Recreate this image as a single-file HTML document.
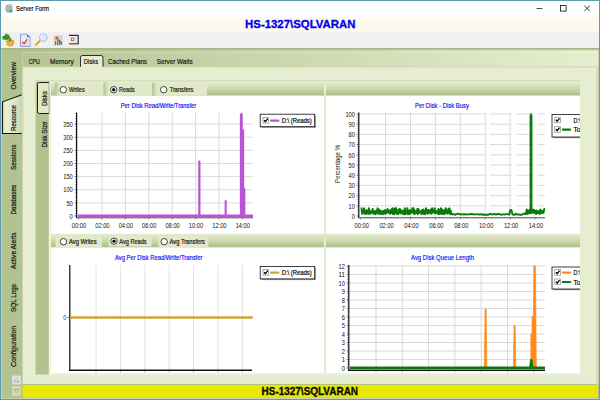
<!DOCTYPE html>
<html><head><meta charset="utf-8"><title>Server Form</title>
<style>
html,body{margin:0;padding:0;background:#fff;overflow:hidden}
body{width:600px;height:400px}
svg{display:block;font-family:"Liberation Sans",Arial,sans-serif}
</style></head><body>
<svg width="600" height="400" viewBox="0 0 600 400">
<defs>
<linearGradient id="gh" gradientUnits="userSpaceOnUse" x1="22" y1="0" x2="598" y2="0"><stop offset="0" stop-color="#b3c38f"/><stop offset="1" stop-color="#e4ebcc"/></linearGradient>
<linearGradient id="gh2" gradientUnits="userSpaceOnUse" x1="22" y1="0" x2="598" y2="0"><stop offset="0" stop-color="#b5c592"/><stop offset="1" stop-color="#e7edd0"/></linearGradient>
<linearGradient id="gv" x1="0" y1="0" x2="0" y2="1"><stop offset="0" stop-color="#e3ebc9"/><stop offset="0.45" stop-color="#d0dbb0"/><stop offset="1" stop-color="#a9bb84"/></linearGradient>
<linearGradient id="gsub" x1="0" y1="0" x2="1" y2="0"><stop offset="0" stop-color="#c3cfa2"/><stop offset="0.12" stop-color="#dde6c2"/><stop offset="1" stop-color="#e0e8c6"/></linearGradient>
<linearGradient id="gedge" x1="0" y1="0" x2="1" y2="0"><stop offset="0" stop-color="#b4c390"/><stop offset="1" stop-color="#e1e9c8"/></linearGradient>
<linearGradient id="gtab" gradientUnits="userSpaceOnUse" x1="3" y1="0" x2="22" y2="0"><stop offset="0" stop-color="#e9efd5"/><stop offset="0.55" stop-color="#e2e9c9"/><stop offset="1" stop-color="#c9d5aa"/></linearGradient>
</defs>

<rect x="0" y="0" width="600" height="400" fill="#fff" />
<rect x="0" y="17" width="600" height="15" fill="#fdf9ec" />
<rect x="0" y="32" width="600" height="16" fill="#f0f0f0" />
<rect x="0" y="48" width="600" height="352" fill="#b3c38f" />
<text x="16" y="11.2" font-size="7.6" fill="#000" font-weight="normal" text-anchor="start" textLength="33" lengthAdjust="spacingAndGlyphs" stroke="#000" stroke-width=".15">Server Form</text>
<g><ellipse cx="9" cy="6" rx="3" ry="1.4" fill="#c9cdd2" stroke="#8d949b" stroke-width=".5"/><path d="M6 6v5a3 1.4 0 0 0 6 0V6" fill="#aeb4bb" stroke="#858c93" stroke-width=".5"/><circle cx="11" cy="11" r="1.6" fill="#4caf3c"/></g>
<line x1="536.5" y1="8.5" x2="542.5" y2="8.5" stroke="#222" stroke-width="0.8" />
<rect x="560.5" y="5.5" width="5.6" height="5.6" fill="none" stroke="#222" stroke-width="0.9"/>
<path d="M584.3 5.6l5.6 5.6M589.9 5.6l-5.6 5.6" stroke="#222" stroke-width="0.9" fill="none"/>
<text x="300.3" y="28.4" font-size="11.4" fill="#0000ee" font-weight="bold" text-anchor="middle" textLength="110.5" lengthAdjust="spacingAndGlyphs" stroke="#0000ee" stroke-width=".3">HS-1327\SQLVARAN</text>
<g>
<path d="M2.200 38.500Q1.800 35.500 4.500 35.800Q5 33.600 7 34.200Q9.500 33.800 9.800 36.500Q11 37.800 9.800 39.500Q8.500 41 6.500 39.800Q5.500 40.800 4.200 39.800Q2.500 39.800 2.200 38.500z" fill="#25b525"/>
<path d="M3 37.500Q4.500 36 6 37.500Q7.500 39 9 37.500" stroke="#16801a" stroke-width="1" fill="none"/>
<circle cx="10.200" cy="42.500" r="3.300" fill="#e2a524"/><circle cx="10.200" cy="42.500" r="3.700" fill="none" stroke="#d8951c" stroke-width="1.300" stroke-dasharray="1.400 1.500"/><circle cx="10.200" cy="42.600" r="1" fill="#f6dd9a"/>
<path d="M6 33.600v3.600M10 38v4" stroke="#4a5070" stroke-width="1"/>
<path d="M20.500 34.300h6.500l3 3v9.200h-9.500z" fill="#e6f0fb" stroke="#8c8fd2" stroke-width=".9"/><path d="M21 42h8.500v4h-8.500z" fill="#cde4f7"/><path d="M27 34.300v3h3z" fill="#3c7ad6"/>
<path d="M22.200 41.800l2 1.900l3-4.600" stroke="#f0401e" stroke-width="1.300" fill="none"/>
<circle cx="43.200" cy="37.500" r="3.700" fill="#dceefc" stroke="#9cc6ee" stroke-width="1.100"/><path d="M41.200 36.500a2.300 2.300 0 0 1 2.500-1.600" stroke="#fff" stroke-width=".9" fill="none"/>
<path d="M39.600 41l-3.800 3.700" stroke="#f0a030" stroke-width="2" stroke-linecap="round"/>
<rect x="53.400" y="35.600" width="9.300" height="9.800" fill="#d2d2d2" stroke="#e4e4e4" stroke-width=".6"/>
<path d="M55.500 45v-3.800" stroke="#3a6ad8" stroke-width="1.100"/><path d="M57.600 45v-4.500M59.400 45v-3.200" stroke="#22a030" stroke-width="1.100"/><path d="M61.200 45v-2" stroke="#c04060" stroke-width="1"/>
<path d="M57 38.500l5 4.800" stroke="#111" stroke-width="1"/>
<circle cx="56.700" cy="38" r="1.900" fill="#f59a1c"/><circle cx="56.700" cy="38" r=".9" fill="#e8301c"/>
<rect x="69" y="34.800" width="9.600" height="9.600" fill="#f4f0d8"/><path d="M69 35.400h9.600M78.200 35v9" stroke="#1c2c70" stroke-width="1.300" fill="none"/><path d="M69 43.800h9.600" stroke="#6a6424" stroke-width="1.400"/><path d="M75.300 37v6M75.300 39h3M75.300 41h3" stroke="#d8d2b0" stroke-width=".6"/>
<rect x="71.400" y="38.100" width="2.300" height="2.600" fill="#fff" stroke="#b03aa0" stroke-width=".8"/>
</g>
<line x1="1.3" y1="48" x2="1.3" y2="398" stroke="#d4dba8" stroke-width="0.7" />
<rect x="22.5" y="48" width="576" height="19" fill="url(#gh)" />
<rect x="22" y="52" width="574.5" height="332.5" fill="#ffffff" fill-opacity=".28"/>
<rect x="23" y="53" width="573.5" height="14" fill="url(#gh2)" />
<rect x="596.5" y="67" width="2" height="317.5" fill="#d3ddb6" />
<rect x="23" y="67" width="573.5" height="317" fill="#e7edd0" />
<line x1="23" y1="66.9" x2="596.5" y2="66.9" stroke="#c9d5ac" stroke-width="0.9" />
<rect x="1" y="48" width="598" height="1.8" fill="#a9b986" />
<path d="M80.500 67V57.500a2 2 0 0 1 2-2H101a2 2 0 0 1 2 2V67" fill="#e7edd0" stroke="#2a2f22" stroke-width="1"/>
<line x1="80" y1="67.5" x2="103.5" y2="67.5" stroke="#e7edd0" stroke-width="1.4" />
<text x="28.7" y="64" font-size="7.6" fill="#141414" font-weight="normal" text-anchor="start" textLength="11.3" lengthAdjust="spacingAndGlyphs" stroke="#141414" stroke-width=".2">CPU</text>
<text x="50" y="64" font-size="7.6" fill="#141414" font-weight="normal" text-anchor="start" textLength="23.7" lengthAdjust="spacingAndGlyphs" stroke="#141414" stroke-width=".2">Memory</text>
<text x="83.7" y="64" font-size="7.6" fill="#141414" font-weight="normal" text-anchor="start" textLength="14.6" lengthAdjust="spacingAndGlyphs" stroke="#141414" stroke-width=".2">Disks</text>
<text x="108" y="64" font-size="7.6" fill="#141414" font-weight="normal" text-anchor="start" textLength="39" lengthAdjust="spacingAndGlyphs" stroke="#141414" stroke-width=".2">Cached Plans</text>
<text x="156.7" y="64" font-size="7.6" fill="#141414" font-weight="normal" text-anchor="start" textLength="36" lengthAdjust="spacingAndGlyphs" stroke="#141414" stroke-width=".2">Server Waits</text>
<path d="M21.800 94.700L2.600 101.800V133.500H21.800" fill="url(#gtab)" stroke="#14170f" stroke-width="1.100" stroke-linejoin="miter"/>
<path d="M21.800 95.300V133H24V95.300z" fill="#c9d5aa"/>
<rect x="22.3" y="95.3" width="1.3" height="37.7" fill="#dfe7c6" />
<text transform="translate(16.4 89.5) rotate(-90)" font-size="7.6" fill="#141414" stroke="#141414" stroke-width=".2" textLength="27.5" lengthAdjust="spacingAndGlyphs">Overview</text>
<text transform="translate(16.4 131) rotate(-90)" font-size="7.6" fill="#141414" stroke="#141414" stroke-width=".2" textLength="26" lengthAdjust="spacingAndGlyphs">Resource</text>
<text transform="translate(16.4 170) rotate(-90)" font-size="7.6" fill="#141414" stroke="#141414" stroke-width=".2" textLength="25.400000000000006" lengthAdjust="spacingAndGlyphs">Sessions</text>
<text transform="translate(16.4 214.5) rotate(-90)" font-size="7.6" fill="#141414" stroke="#141414" stroke-width=".2" textLength="29.5" lengthAdjust="spacingAndGlyphs">Databases</text>
<text transform="translate(16.4 269) rotate(-90)" font-size="7.6" fill="#141414" stroke="#141414" stroke-width=".2" textLength="36.5" lengthAdjust="spacingAndGlyphs">Active Alerts</text>
<text transform="translate(16.4 312) rotate(-90)" font-size="7.6" fill="#141414" stroke="#141414" stroke-width=".2" textLength="28" lengthAdjust="spacingAndGlyphs">SQL Logs</text>
<text transform="translate(16.4 367) rotate(-90)" font-size="7.6" fill="#141414" stroke="#141414" stroke-width=".2" textLength="41" lengthAdjust="spacingAndGlyphs">Configuration</text>
<rect x="12" y="375.5" width="9" height="9" fill="#dedee8" rx="1"/>
<path d="M13.800 381.800L16.500 378.800L19.200 381.800z" fill="#f4efe2" stroke="#9a8458" stroke-width=".6"/>
<rect x="12" y="386" width="9" height="10" fill="#cfdab5" rx="1"/>
<path d="M14 389.500L16.500 392.300L19 389.500z" fill="#f4efe2" stroke="#9a8458" stroke-width=".6"/>
<rect x="22.5" y="384.5" width="575.5" height="12.7" fill="#e8e800" />
<line x1="22.5" y1="384.4" x2="597" y2="384.4" stroke="#9db394" stroke-width="0.7" />
<text x="309.8" y="394.9" font-size="10" fill="#0a0a0a" font-weight="bold" text-anchor="middle" textLength="96.5" lengthAdjust="spacingAndGlyphs" stroke="#0a0a0a" stroke-width=".3">HS-1327\SQLVARAN</text>
<rect x="35" y="80" width="545" height="294.5" fill="#eef3de" />
<rect x="35.5" y="81.5" width="14" height="293" fill="#b3c38f" />
<rect x="48.8" y="81.5" width="2.4" height="293" fill="#edf2dd" />
<path d="M48.800 82.500H39.500a2 2 0 0 0-2 2V111.500a2 2 0 0 0 2 2H48.800z" fill="#e1e8c6" stroke="#181c12" stroke-width="1"/>
<rect x="48.2" y="83.1" width="1.2" height="29.8" fill="#e6ecd0" />
<text transform="translate(46.7 106) rotate(-90)" font-size="7.3" fill="#141414" stroke="#141414" stroke-width=".2" textLength="15" lengthAdjust="spacingAndGlyphs">Disks</text>
<text transform="translate(46.7 147.5) rotate(-90)" font-size="7.6" fill="#141414" stroke="#141414" stroke-width=".2" textLength="26.0" lengthAdjust="spacingAndGlyphs">Disk Size</text>
<rect x="51" y="82" width="273" height="13.7" fill="url(#gv)" />
<rect x="326" y="82" width="254" height="13.7" fill="url(#gv)" />
<rect x="51" y="234.3" width="273" height="13.2" fill="url(#gv)" />
<rect x="326" y="234.3" width="254" height="13.2" fill="url(#gv)" />
<line x1="35.5" y1="81" x2="580" y2="81" stroke="#c0cea0" stroke-width="1.1" />
<line x1="51" y1="82.2" x2="580" y2="82.2" stroke="#f1f5e3" stroke-width="0.8" />
<rect x="324" y="82" width="2" height="292.5" fill="#e6ecd0" />
<rect x="51" y="95.7" width="273" height="138.6" fill="#fff" />
<rect x="51" y="247.5" width="273" height="125.5" fill="#fff" />
<rect x="326" y="95.7" width="254" height="138.6" fill="#fff" />
<rect x="326" y="247.5" width="254" height="125.5" fill="#fff" />
<line x1="51" y1="234.3" x2="580" y2="234.3" stroke="#dfe6c8" stroke-width="0.8" />
<rect x="55" y="82.5" width="48.5" height="13.2" fill="#e1e9c8" />
<rect x="55" y="82.5" width="5" height="13.2" fill="url(#gedge)" />
<circle cx="63.3" cy="89.7" r="3.2" fill="#fff" stroke="#2e2e2e" stroke-width=".9"/>
<text x="69" y="92.3" font-size="7.4" fill="#111" font-weight="normal" text-anchor="start" textLength="15.7" lengthAdjust="spacingAndGlyphs" stroke="#111" stroke-width=".2">Writes</text>
<rect x="103.5" y="82.5" width="48.5" height="13.2" fill="#e1e9c8" />
<rect x="103.5" y="82.5" width="5" height="13.2" fill="url(#gedge)" />
<circle cx="113.7" cy="89.7" r="3.2" fill="#fff" stroke="#2e2e2e" stroke-width=".9"/>
<circle cx="113.7" cy="89.7" r="1.700" fill="#111"/>
<text x="119" y="92.3" font-size="7.4" fill="#111" font-weight="normal" text-anchor="start" textLength="15.7" lengthAdjust="spacingAndGlyphs" stroke="#111" stroke-width=".2">Reads</text>
<rect x="152" y="82.5" width="55" height="13.2" fill="#e1e9c8" />
<rect x="152" y="82.5" width="5" height="13.2" fill="url(#gedge)" />
<circle cx="163.7" cy="89.7" r="3.2" fill="#fff" stroke="#2e2e2e" stroke-width=".9"/>
<text x="169.7" y="92.3" font-size="7.4" fill="#111" font-weight="normal" text-anchor="start" textLength="23.6" lengthAdjust="spacingAndGlyphs" stroke="#111" stroke-width=".2">Transfers</text>
<rect x="55.5" y="235.8" width="46.5" height="11.7" fill="#e1e9c8" />
<circle cx="63.5" cy="241.7" r="3.2" fill="#fff" stroke="#2e2e2e" stroke-width=".9"/>
<text x="69" y="244.29999999999998" font-size="7.4" fill="#111" font-weight="normal" text-anchor="start" textLength="27.7" lengthAdjust="spacingAndGlyphs" stroke="#111" stroke-width=".2">Avg Writes</text>
<rect x="108.5" y="234.8" width="43.2" height="11.6" fill="#e1e9c8" />
<circle cx="114" cy="241.2" r="3.2" fill="#fff" stroke="#2e2e2e" stroke-width=".9"/>
<circle cx="114" cy="241.2" r="1.700" fill="#111"/>
<text x="119.3" y="243.79999999999998" font-size="7.4" fill="#111" font-weight="normal" text-anchor="start" textLength="27.3" lengthAdjust="spacingAndGlyphs" stroke="#111" stroke-width=".2">Avg Reads</text>
<rect x="158.5" y="235.8" width="50" height="11.7" fill="#e1e9c8" />
<circle cx="164.2" cy="241.7" r="3.2" fill="#fff" stroke="#2e2e2e" stroke-width=".9"/>
<text x="169.6" y="244.29999999999998" font-size="7.4" fill="#111" font-weight="normal" text-anchor="start" textLength="35.4" lengthAdjust="spacingAndGlyphs" stroke="#111" stroke-width=".2">Avg Transfers</text>
<line x1="102.0" y1="112.5" x2="102.0" y2="217" stroke="#dadada" stroke-width="1" />
<line x1="125.39999999999999" y1="112.5" x2="125.39999999999999" y2="217" stroke="#dadada" stroke-width="1" />
<line x1="148.79999999999998" y1="112.5" x2="148.79999999999998" y2="217" stroke="#dadada" stroke-width="1" />
<line x1="172.2" y1="112.5" x2="172.2" y2="217" stroke="#dadada" stroke-width="1" />
<line x1="195.6" y1="112.5" x2="195.6" y2="217" stroke="#dadada" stroke-width="1" />
<line x1="218.99999999999997" y1="112.5" x2="218.99999999999997" y2="217" stroke="#dadada" stroke-width="1" />
<line x1="242.39999999999998" y1="112.5" x2="242.39999999999998" y2="217" stroke="#dadada" stroke-width="1" />
<line x1="74.3" y1="216.0" x2="76" y2="216.0" stroke="#555" stroke-width="0.6" />
<text x="72.8" y="218.7" font-size="7.4" fill="#111" font-weight="normal" text-anchor="end" textLength="3.2" lengthAdjust="spacingAndGlyphs" >0</text>
<line x1="77" y1="202.87" x2="253" y2="202.87" stroke="#dadada" stroke-width="1" />
<line x1="74.3" y1="202.87" x2="76" y2="202.87" stroke="#555" stroke-width="0.6" />
<text x="72.8" y="205.57" font-size="7.4" fill="#111" font-weight="normal" text-anchor="end" textLength="6.4" lengthAdjust="spacingAndGlyphs" >50</text>
<line x1="77" y1="189.74" x2="253" y2="189.74" stroke="#dadada" stroke-width="1" />
<line x1="74.3" y1="189.74" x2="76" y2="189.74" stroke="#555" stroke-width="0.6" />
<text x="72.8" y="192.44" font-size="7.4" fill="#111" font-weight="normal" text-anchor="end" textLength="9.600000000000001" lengthAdjust="spacingAndGlyphs" >100</text>
<line x1="77" y1="176.60999999999999" x2="253" y2="176.60999999999999" stroke="#dadada" stroke-width="1" />
<line x1="74.3" y1="176.60999999999999" x2="76" y2="176.60999999999999" stroke="#555" stroke-width="0.6" />
<text x="72.8" y="179.30999999999997" font-size="7.4" fill="#111" font-weight="normal" text-anchor="end" textLength="9.600000000000001" lengthAdjust="spacingAndGlyphs" >150</text>
<line x1="77" y1="163.48" x2="253" y2="163.48" stroke="#dadada" stroke-width="1" />
<line x1="74.3" y1="163.48" x2="76" y2="163.48" stroke="#555" stroke-width="0.6" />
<text x="72.8" y="166.17999999999998" font-size="7.4" fill="#111" font-weight="normal" text-anchor="end" textLength="9.600000000000001" lengthAdjust="spacingAndGlyphs" >200</text>
<line x1="77" y1="150.35" x2="253" y2="150.35" stroke="#dadada" stroke-width="1" />
<line x1="74.3" y1="150.35" x2="76" y2="150.35" stroke="#555" stroke-width="0.6" />
<text x="72.8" y="153.04999999999998" font-size="7.4" fill="#111" font-weight="normal" text-anchor="end" textLength="9.600000000000001" lengthAdjust="spacingAndGlyphs" >250</text>
<line x1="77" y1="137.21999999999997" x2="253" y2="137.21999999999997" stroke="#dadada" stroke-width="1" />
<line x1="74.3" y1="137.21999999999997" x2="76" y2="137.21999999999997" stroke="#555" stroke-width="0.6" />
<text x="72.8" y="139.91999999999996" font-size="7.4" fill="#111" font-weight="normal" text-anchor="end" textLength="9.600000000000001" lengthAdjust="spacingAndGlyphs" >300</text>
<line x1="77" y1="124.09" x2="253" y2="124.09" stroke="#dadada" stroke-width="1" />
<line x1="74.3" y1="124.09" x2="76" y2="124.09" stroke="#555" stroke-width="0.6" />
<text x="72.8" y="126.79" font-size="7.4" fill="#111" font-weight="normal" text-anchor="end" textLength="9.600000000000001" lengthAdjust="spacingAndGlyphs" >350</text>
<text x="158.5" y="108.3" font-size="6.9" fill="#0a0af5" font-weight="normal" text-anchor="middle" textLength="75.5" lengthAdjust="spacingAndGlyphs" stroke="#0a0af5" stroke-width=".15">Per Disk Read/Write/Transfer</text>
<line x1="75.7" y1="216.25" x2="75.7" y2="112.5" stroke="#333" stroke-width="1" stroke-dasharray=".5 2.126"/>
<line x1="76.6" y1="112.5" x2="76.6" y2="218" stroke="#111" stroke-width="1.2" />
<line x1="76" y1="217.8" x2="253" y2="217.8" stroke="#333" stroke-width="0.9" />
<line x1="78.6" y1="218" x2="78.6" y2="219.5" stroke="#444" stroke-width="0.6" />
<text x="79.0" y="227.6" font-size="6.9" fill="#111" font-weight="normal" text-anchor="middle" textLength="14.3" lengthAdjust="spacingAndGlyphs" >00:00</text>
<line x1="102.0" y1="218" x2="102.0" y2="219.5" stroke="#444" stroke-width="0.6" />
<text x="102.4" y="227.6" font-size="6.9" fill="#111" font-weight="normal" text-anchor="middle" textLength="14.3" lengthAdjust="spacingAndGlyphs" >02:00</text>
<line x1="125.39999999999999" y1="218" x2="125.39999999999999" y2="219.5" stroke="#444" stroke-width="0.6" />
<text x="125.8" y="227.6" font-size="6.9" fill="#111" font-weight="normal" text-anchor="middle" textLength="14.3" lengthAdjust="spacingAndGlyphs" >04:00</text>
<line x1="148.79999999999998" y1="218" x2="148.79999999999998" y2="219.5" stroke="#444" stroke-width="0.6" />
<text x="149.2" y="227.6" font-size="6.9" fill="#111" font-weight="normal" text-anchor="middle" textLength="14.3" lengthAdjust="spacingAndGlyphs" >06:00</text>
<line x1="172.2" y1="218" x2="172.2" y2="219.5" stroke="#444" stroke-width="0.6" />
<text x="172.6" y="227.6" font-size="6.9" fill="#111" font-weight="normal" text-anchor="middle" textLength="14.3" lengthAdjust="spacingAndGlyphs" >08:00</text>
<line x1="195.6" y1="218" x2="195.6" y2="219.5" stroke="#444" stroke-width="0.6" />
<text x="196.0" y="227.6" font-size="6.9" fill="#111" font-weight="normal" text-anchor="middle" textLength="14.3" lengthAdjust="spacingAndGlyphs" >10:00</text>
<line x1="218.99999999999997" y1="218" x2="218.99999999999997" y2="219.5" stroke="#444" stroke-width="0.6" />
<text x="219.39999999999998" y="227.6" font-size="6.9" fill="#111" font-weight="normal" text-anchor="middle" textLength="14.3" lengthAdjust="spacingAndGlyphs" >12:00</text>
<line x1="242.39999999999998" y1="218" x2="242.39999999999998" y2="219.5" stroke="#444" stroke-width="0.6" />
<text x="242.79999999999998" y="227.6" font-size="6.9" fill="#111" font-weight="normal" text-anchor="middle" textLength="14.3" lengthAdjust="spacingAndGlyphs" >14:00</text>
<path d="M198.300 216V161.3792Q199.300 159.8036 200.300 161.3792V216z M224.800 216V200.7692Q225.700 199.1936 226.600 200.7692V216z M240 216V114.1112Q241.300 112.01039999999999 242.600 114.1112V128.8168Q244 128.8168 244 131.968V187.6392Q245.200 187.6392 245.200 189.74V216z" fill="#b955d3" stroke="#b955d3" stroke-width=".3" stroke-linejoin="round"/>
<line x1="78" y1="216" x2="253" y2="216" stroke="#b955d3" stroke-width="3" />
<g>
<rect x="261.4" y="115.4" width="54.5" height="12.5" fill="#9a9a9a" />
<rect x="260.2" y="114.2" width="54.5" height="12.5" fill="#fff" stroke="#111" stroke-width=".8"/>
<rect x="263.0" y="117.6" width="5.6" height="5.6" fill="#fff" stroke="#777" stroke-width=".6"/>
<path d="M264.09999999999997 120.19999999999999l1.300 1.500l2.300-3" stroke="#000" stroke-width="1.3" fill="none"/>
<line x1="271.0" y1="120.6" x2="278.4" y2="120.6" stroke="#b955d3" stroke-width="2.2" stroke-linecap="round"/>
<text x="281.7" y="123.1" font-size="6.9" fill="#000" font-weight="normal" text-anchor="start" textLength="30" lengthAdjust="spacingAndGlyphs" stroke="#000" stroke-width=".18">D:\ (Reads)</text>
</g>
<line x1="385.59999999999997" y1="112.5" x2="385.59999999999997" y2="217" stroke="#dadada" stroke-width="1" />
<line x1="410.5" y1="112.5" x2="410.5" y2="217" stroke="#dadada" stroke-width="1" />
<line x1="435.4" y1="112.5" x2="435.4" y2="217" stroke="#dadada" stroke-width="1" />
<line x1="460.29999999999995" y1="112.5" x2="460.29999999999995" y2="217" stroke="#dadada" stroke-width="1" />
<line x1="485.2" y1="112.5" x2="485.2" y2="217" stroke="#dadada" stroke-width="1" />
<line x1="510.09999999999997" y1="112.5" x2="510.09999999999997" y2="217" stroke="#dadada" stroke-width="1" />
<line x1="535.0" y1="112.5" x2="535.0" y2="217" stroke="#dadada" stroke-width="1" />
<line x1="356.5" y1="216.0" x2="358.2" y2="216.0" stroke="#555" stroke-width="0.6" />
<text x="355" y="218.7" font-size="7.4" fill="#111" font-weight="normal" text-anchor="end" textLength="3.2" lengthAdjust="spacingAndGlyphs" >0</text>
<line x1="359" y1="205.8" x2="545" y2="205.8" stroke="#dadada" stroke-width="1" />
<line x1="356.5" y1="205.8" x2="358.2" y2="205.8" stroke="#555" stroke-width="0.6" />
<text x="355" y="208.5" font-size="7.4" fill="#111" font-weight="normal" text-anchor="end" textLength="6.4" lengthAdjust="spacingAndGlyphs" >10</text>
<line x1="359" y1="195.6" x2="545" y2="195.6" stroke="#dadada" stroke-width="1" />
<line x1="356.5" y1="195.6" x2="358.2" y2="195.6" stroke="#555" stroke-width="0.6" />
<text x="355" y="198.29999999999998" font-size="7.4" fill="#111" font-weight="normal" text-anchor="end" textLength="6.4" lengthAdjust="spacingAndGlyphs" >20</text>
<line x1="359" y1="185.4" x2="545" y2="185.4" stroke="#dadada" stroke-width="1" />
<line x1="356.5" y1="185.4" x2="358.2" y2="185.4" stroke="#555" stroke-width="0.6" />
<text x="355" y="188.1" font-size="7.4" fill="#111" font-weight="normal" text-anchor="end" textLength="6.4" lengthAdjust="spacingAndGlyphs" >30</text>
<line x1="359" y1="175.2" x2="545" y2="175.2" stroke="#dadada" stroke-width="1" />
<line x1="356.5" y1="175.2" x2="358.2" y2="175.2" stroke="#555" stroke-width="0.6" />
<text x="355" y="177.89999999999998" font-size="7.4" fill="#111" font-weight="normal" text-anchor="end" textLength="6.4" lengthAdjust="spacingAndGlyphs" >40</text>
<line x1="359" y1="165.0" x2="545" y2="165.0" stroke="#dadada" stroke-width="1" />
<line x1="356.5" y1="165.0" x2="358.2" y2="165.0" stroke="#555" stroke-width="0.6" />
<text x="355" y="167.7" font-size="7.4" fill="#111" font-weight="normal" text-anchor="end" textLength="6.4" lengthAdjust="spacingAndGlyphs" >50</text>
<line x1="359" y1="154.8" x2="545" y2="154.8" stroke="#dadada" stroke-width="1" />
<line x1="356.5" y1="154.8" x2="358.2" y2="154.8" stroke="#555" stroke-width="0.6" />
<text x="355" y="157.5" font-size="7.4" fill="#111" font-weight="normal" text-anchor="end" textLength="6.4" lengthAdjust="spacingAndGlyphs" >60</text>
<line x1="359" y1="144.6" x2="545" y2="144.6" stroke="#dadada" stroke-width="1" />
<line x1="356.5" y1="144.6" x2="358.2" y2="144.6" stroke="#555" stroke-width="0.6" />
<text x="355" y="147.29999999999998" font-size="7.4" fill="#111" font-weight="normal" text-anchor="end" textLength="6.4" lengthAdjust="spacingAndGlyphs" >70</text>
<line x1="359" y1="134.4" x2="545" y2="134.4" stroke="#dadada" stroke-width="1" />
<line x1="356.5" y1="134.4" x2="358.2" y2="134.4" stroke="#555" stroke-width="0.6" />
<text x="355" y="137.1" font-size="7.4" fill="#111" font-weight="normal" text-anchor="end" textLength="6.4" lengthAdjust="spacingAndGlyphs" >80</text>
<line x1="359" y1="124.2" x2="545" y2="124.2" stroke="#dadada" stroke-width="1" />
<line x1="356.5" y1="124.2" x2="358.2" y2="124.2" stroke="#555" stroke-width="0.6" />
<text x="355" y="126.9" font-size="7.4" fill="#111" font-weight="normal" text-anchor="end" textLength="6.4" lengthAdjust="spacingAndGlyphs" >90</text>
<line x1="359" y1="114.0" x2="545" y2="114.0" stroke="#dadada" stroke-width="1" />
<line x1="356.5" y1="114.0" x2="358.2" y2="114.0" stroke="#555" stroke-width="0.6" />
<text x="355" y="116.7" font-size="7.4" fill="#111" font-weight="normal" text-anchor="end" textLength="9.600000000000001" lengthAdjust="spacingAndGlyphs" >100</text>
<rect x="486.5" y="112" width="3.5" height="103" fill="#fff" />
<rect x="511.5" y="112" width="5.5" height="103" fill="#fff" />
<rect x="533" y="112" width="4.5" height="103" fill="#fff" />
<text x="442" y="108.3" font-size="6.9" fill="#0a0af5" font-weight="normal" text-anchor="middle" textLength="54" lengthAdjust="spacingAndGlyphs" stroke="#0a0af5" stroke-width=".15">Per Disk - Disk Busy</text>
<text transform="translate(339.500 183) rotate(-90)" font-size="6.9" fill="#111" textLength="38" lengthAdjust="spacingAndGlyphs">Percentage %</text>
<line x1="357.9" y1="216.25" x2="357.9" y2="113.5" stroke="#333" stroke-width="1" stroke-dasharray=".5 1.54"/>
<line x1="358.8" y1="112.5" x2="358.8" y2="218" stroke="#111" stroke-width="1.2" />
<line x1="358" y1="217.8" x2="545" y2="217.8" stroke="#333" stroke-width="0.9" />
<line x1="360.7" y1="218" x2="360.7" y2="219.5" stroke="#444" stroke-width="0.6" />
<text x="361.7" y="227.6" font-size="6.9" fill="#111" font-weight="normal" text-anchor="middle" textLength="14.3" lengthAdjust="spacingAndGlyphs" >00:00</text>
<line x1="385.59999999999997" y1="218" x2="385.59999999999997" y2="219.5" stroke="#444" stroke-width="0.6" />
<text x="386.59999999999997" y="227.6" font-size="6.9" fill="#111" font-weight="normal" text-anchor="middle" textLength="14.3" lengthAdjust="spacingAndGlyphs" >02:00</text>
<line x1="410.5" y1="218" x2="410.5" y2="219.5" stroke="#444" stroke-width="0.6" />
<text x="411.5" y="227.6" font-size="6.9" fill="#111" font-weight="normal" text-anchor="middle" textLength="14.3" lengthAdjust="spacingAndGlyphs" >04:00</text>
<line x1="435.4" y1="218" x2="435.4" y2="219.5" stroke="#444" stroke-width="0.6" />
<text x="436.4" y="227.6" font-size="6.9" fill="#111" font-weight="normal" text-anchor="middle" textLength="14.3" lengthAdjust="spacingAndGlyphs" >06:00</text>
<line x1="460.29999999999995" y1="218" x2="460.29999999999995" y2="219.5" stroke="#444" stroke-width="0.6" />
<text x="461.29999999999995" y="227.6" font-size="6.9" fill="#111" font-weight="normal" text-anchor="middle" textLength="14.3" lengthAdjust="spacingAndGlyphs" >08:00</text>
<line x1="485.2" y1="218" x2="485.2" y2="219.5" stroke="#444" stroke-width="0.6" />
<text x="486.2" y="227.6" font-size="6.9" fill="#111" font-weight="normal" text-anchor="middle" textLength="14.3" lengthAdjust="spacingAndGlyphs" >10:00</text>
<line x1="510.09999999999997" y1="218" x2="510.09999999999997" y2="219.5" stroke="#444" stroke-width="0.6" />
<text x="511.09999999999997" y="227.6" font-size="6.9" fill="#111" font-weight="normal" text-anchor="middle" textLength="14.3" lengthAdjust="spacingAndGlyphs" >12:00</text>
<line x1="535.0" y1="218" x2="535.0" y2="219.5" stroke="#444" stroke-width="0.6" />
<text x="536.0" y="227.6" font-size="6.9" fill="#111" font-weight="normal" text-anchor="middle" textLength="14.3" lengthAdjust="spacingAndGlyphs" >14:00</text>
<path d="M361.5 208.2 L362.1 213.8 L362.7 211.4 L363.4 212.5 L364.0 208.2 L364.6 213.8 L365.2 211.4 L365.8 213.8 L366.5 209.9 L367.1 213.6 L367.7 211.4 L368.3 213.8 L368.9 208.2 L369.6 213.8 L370.2 211.4 L370.8 213.6 L371.4 210.9 L372.0 212.5 L372.7 208.9 L373.3 213.6 L373.9 210.9 L374.5 213.8 L375.1 211.4 L375.8 214.2 L376.4 210.4 L377.0 212.5 L377.6 208.2 L378.2 213.8 L378.9 209.4 L379.5 213.6 L380.1 210.4 L380.7 214.2 L381.3 211.4 L382.0 213.8 L382.6 210.9 L383.2 214.2 L383.8 210.9 L384.4 213.6 L385.1 209.9 L385.7 213.8 L386.3 210.9 L386.9 212.5 L387.5 208.9 L388.2 212.5 L388.8 210.4 L389.4 213.6 L390.0 210.4 L390.6 213.6 L391.3 209.4 L391.9 212.9 L392.5 208.2 L393.1 214.2 L393.7 209.4 L394.4 214.2 L395.0 208.2 L395.6 212.9 L396.2 208.2 L396.8 213.8 L397.5 211.4 L398.1 214.2 L398.7 209.4 L399.3 212.9 L399.9 208.9 L400.6 213.6 L401.2 210.4 L401.8 212.9 L402.4 210.9 L403.0 214.2 L403.7 210.4 L404.3 214.2 L404.9 208.2 L405.5 214.2 L406.1 211.4 L406.8 212.9 L407.4 208.2 L408.0 214.2 L408.6 210.9 L409.2 214.2 L409.9 209.9 L410.5 213.6 L411.1 210.9 L411.7 212.5 L412.3 208.2 L413.0 212.5 L413.6 208.2 L414.2 214.2 L414.8 210.4 L415.4 213.6 L416.1 211.4 L416.7 212.9 L417.3 208.9 L417.9 214.2 L418.5 208.9 L419.2 212.9 L419.8 210.9 L420.4 212.5 L421.0 211.4 L421.6 214.2 L422.3 209.9 L422.9 213.6 L423.5 209.4 L424.1 214.2 L424.7 210.9 L425.4 214.2 L426.0 208.2 L426.6 212.5 L427.2 209.9 L427.8 213.8 L428.5 209.9 L429.1 212.5 L429.7 210.4 L430.3 213.6 L430.9 209.4 L431.6 213.6 L432.2 208.2 L432.8 212.5 L433.4 210.9 L434.0 212.5 L434.7 208.2 L435.3 213.6 L435.9 210.9 L436.5 212.9 L437.1 211.4 L437.8 213.8 L438.4 208.9 L439.0 214.2 L439.6 209.9 L440.2 213.6 L440.9 208.2 L441.5 213.8 L442.1 209.4 L442.7 213.8 L443.3 210.9 L444.0 214.2 L444.6 209.9 L445.2 213.6 L445.8 208.2 L446.4 212.9 L447.1 210.9 L447.7 213.8 L448.3 208.9 L448.9 212.9 L449.5 208.2 L450.2 214.2 L450.8 210.9 L451.4 214.2 L452.0 214.4 L453.1 214.1 L454.2 214.4 L455.3 214.8 L456.4 214.1 L457.5 213.8 L458.6 213.8 L459.7 214.1 L460.8 214.5 L461.9 214.4 L463.0 214.1 L464.1 214.5 L465.2 214.1 L466.3 214.4 L467.4 214.5 L468.5 214.4 L469.6 214.4 L470.7 213.8 L471.8 214.4 L472.9 214.1 L474.0 214.4 L475.1 214.4 L476.2 214.4 L477.3 214.1 L478.4 214.4 L479.5 214.5 L480.6 214.5 L481.7 214.1 L482.8 214.8 L483.9 214.5 L485.0 214.8 L486.1 214.8 L487.2 214.8 L488.3 214.8 L489.4 214.1 L490.5 213.8 L491.6 214.4 L492.7 214.5 L493.8 213.8 L494.9 214.5 L496.0 214.1 L497.1 214.5 L498.2 213.8 L499.3 214.1 L500.4 214.4 L501.5 214.8 L502.6 214.4 L503.7 214.4 L504.8 214.5 L505.9 214.1 L507.0 214.1 L508.1 214.1 L509.2 214.8 L510.3 209.9 L511.4 209.9 L512.5 214.4 L513.6 214.8 L514.7 214.8 L515.8 213.8 L516.9 214.5 L518.0 214.5 L519.1 214.4 L520.2 214.8 L521.3 214.8 L522.4 214.4 L523.5 213.8 L524.6 213.8 L525.7 214.1 L526.8 209.4 L527.4 214.0 L528.1 210.9 L528.7 213.3 L529.3 209.9 L529.9 213.3 L530.5 208.9 L531.2 212.7 L531.8 211.4 L532.4 212.7 L533.0 209.4 L533.6 212.7 L534.3 209.9 L534.9 212.7 L535.5 210.9 L536.1 214.0 L536.7 210.4 L537.4 213.3 L538.0 211.4 L538.6 213.3 L539.2 210.9 L539.8 214.0 L540.5 209.4 L541.1 212.7 L541.7 210.9 L542.3 213.3 L542.9 210.9 L543.6 212.7 L544.2 208.9" fill="none" stroke="#0a7a0a" stroke-width="1.900" stroke-linejoin="round" stroke-linecap="round"/>
<path d="M529.800 213V116Q531 110 532.200 116V213z" fill="#0a7a0a" stroke="#0a7a0a" stroke-width=".4"/>
<clipPath id="c552_114"><rect x="0" y="0" width="580" height="400"/></clipPath>
<g clip-path="url(#c552_114)">
<rect x="553.2" y="115.7" width="40" height="22.5" fill="#9a9a9a" />
<rect x="552" y="114.5" width="40" height="22.5" fill="#fff" stroke="#111" stroke-width=".8"/>
<rect x="554.8" y="117.2" width="5.6" height="5.6" fill="#fff" stroke="#777" stroke-width=".6"/>
<path d="M555.9 119.8l1.300 1.500l2.300-3" stroke="#000" stroke-width="1.3" fill="none"/>
<text x="573.5" y="122.7" font-size="6.9" fill="#000" font-weight="normal" text-anchor="start" textLength="7" lengthAdjust="spacingAndGlyphs" stroke="#000" stroke-width=".18">D:\</text>
<rect x="554.8" y="126.6" width="5.6" height="5.6" fill="#fff" stroke="#777" stroke-width=".6"/>
<path d="M555.9 129.2l1.300 1.500l2.300-3" stroke="#000" stroke-width="1.3" fill="none"/>
<line x1="562.8" y1="129.6" x2="570.2" y2="129.6" stroke="#0a7a0a" stroke-width="2.2" stroke-linecap="round"/>
<text x="573.5" y="132.1" font-size="6.9" fill="#000" font-weight="normal" text-anchor="start" textLength="14" lengthAdjust="spacingAndGlyphs" stroke="#000" stroke-width=".18">Total</text>
</g>
<line x1="96.0" y1="265" x2="96.0" y2="370" stroke="#e2e2e2" stroke-width="1" />
<line x1="96.0" y1="371" x2="96.0" y2="372.3" stroke="#777" stroke-width="0.6" />
<line x1="120.39999999999999" y1="265" x2="120.39999999999999" y2="370" stroke="#e2e2e2" stroke-width="1" />
<line x1="120.39999999999999" y1="371" x2="120.39999999999999" y2="372.3" stroke="#777" stroke-width="0.6" />
<line x1="144.79999999999998" y1="265" x2="144.79999999999998" y2="370" stroke="#e2e2e2" stroke-width="1" />
<line x1="144.79999999999998" y1="371" x2="144.79999999999998" y2="372.3" stroke="#777" stroke-width="0.6" />
<line x1="169.2" y1="265" x2="169.2" y2="370" stroke="#e2e2e2" stroke-width="1" />
<line x1="169.2" y1="371" x2="169.2" y2="372.3" stroke="#777" stroke-width="0.6" />
<line x1="193.6" y1="265" x2="193.6" y2="370" stroke="#e2e2e2" stroke-width="1" />
<line x1="193.6" y1="371" x2="193.6" y2="372.3" stroke="#777" stroke-width="0.6" />
<line x1="217.99999999999997" y1="265" x2="217.99999999999997" y2="370" stroke="#e2e2e2" stroke-width="1" />
<line x1="217.99999999999997" y1="371" x2="217.99999999999997" y2="372.3" stroke="#777" stroke-width="0.6" />
<line x1="242.39999999999998" y1="265" x2="242.39999999999998" y2="370" stroke="#e2e2e2" stroke-width="1" />
<line x1="242.39999999999998" y1="371" x2="242.39999999999998" y2="372.3" stroke="#777" stroke-width="0.6" />
<text x="158.7" y="260.3" font-size="6.9" fill="#0a0af5" font-weight="normal" text-anchor="middle" textLength="87.5" lengthAdjust="spacingAndGlyphs" stroke="#0a0af5" stroke-width=".15">Avg Per Disk Read/Write/Transfer</text>
<line x1="69.8" y1="265" x2="69.8" y2="371" stroke="#111" stroke-width="1.2" />
<line x1="69.3" y1="370.2" x2="252" y2="370.2" stroke="#111" stroke-width="1.4" />
<line x1="67.5" y1="317.5" x2="69" y2="317.5" stroke="#222" stroke-width="0.7" />
<text x="66.3" y="320" font-size="7" fill="#333" font-weight="normal" text-anchor="end" textLength="3.1" lengthAdjust="spacingAndGlyphs" >0</text>
<line x1="71" y1="317.5" x2="252" y2="317.5" stroke="#d0a534" stroke-width="2.3" stroke-linecap="round"/>
<g>
<rect x="261.4" y="267.59999999999997" width="54.5" height="12.5" fill="#9a9a9a" />
<rect x="260.2" y="266.4" width="54.5" height="12.5" fill="#fff" stroke="#111" stroke-width=".8"/>
<rect x="263.0" y="269.6" width="5.6" height="5.6" fill="#fff" stroke="#777" stroke-width=".6"/>
<path d="M264.09999999999997 272.20000000000005l1.300 1.500l2.300-3" stroke="#000" stroke-width="1.3" fill="none"/>
<line x1="271.0" y1="272.6" x2="278.4" y2="272.6" stroke="#d0a534" stroke-width="2.2" stroke-linecap="round"/>
<text x="281.7" y="275.1" font-size="6.9" fill="#000" font-weight="normal" text-anchor="start" textLength="30" lengthAdjust="spacingAndGlyphs" stroke="#000" stroke-width=".18">D:\ (Reads)</text>
</g>
<line x1="376.0" y1="265" x2="376.0" y2="370" stroke="#dadada" stroke-width="1" />
<line x1="376.0" y1="371" x2="376.0" y2="372.3" stroke="#777" stroke-width="0.6" />
<line x1="402.3" y1="265" x2="402.3" y2="370" stroke="#dadada" stroke-width="1" />
<line x1="402.3" y1="371" x2="402.3" y2="372.3" stroke="#777" stroke-width="0.6" />
<line x1="428.6" y1="265" x2="428.6" y2="370" stroke="#dadada" stroke-width="1" />
<line x1="428.6" y1="371" x2="428.6" y2="372.3" stroke="#777" stroke-width="0.6" />
<line x1="454.9" y1="265" x2="454.9" y2="370" stroke="#dadada" stroke-width="1" />
<line x1="454.9" y1="371" x2="454.9" y2="372.3" stroke="#777" stroke-width="0.6" />
<line x1="481.2" y1="265" x2="481.2" y2="370" stroke="#dadada" stroke-width="1" />
<line x1="481.2" y1="371" x2="481.2" y2="372.3" stroke="#777" stroke-width="0.6" />
<line x1="507.5" y1="265" x2="507.5" y2="370" stroke="#dadada" stroke-width="1" />
<line x1="507.5" y1="371" x2="507.5" y2="372.3" stroke="#777" stroke-width="0.6" />
<line x1="533.8" y1="265" x2="533.8" y2="370" stroke="#dadada" stroke-width="1" />
<line x1="533.8" y1="371" x2="533.8" y2="372.3" stroke="#777" stroke-width="0.6" />
<line x1="346.5" y1="368.0" x2="348.2" y2="368.0" stroke="#555" stroke-width="0.6" />
<text x="345" y="370.7" font-size="7.4" fill="#111" font-weight="normal" text-anchor="end" textLength="3.2" lengthAdjust="spacingAndGlyphs" >0</text>
<line x1="349" y1="359.5" x2="545" y2="359.5" stroke="#dadada" stroke-width="1" />
<line x1="346.5" y1="359.5" x2="348.2" y2="359.5" stroke="#555" stroke-width="0.6" />
<text x="345" y="362.2" font-size="7.4" fill="#111" font-weight="normal" text-anchor="end" textLength="3.2" lengthAdjust="spacingAndGlyphs" >1</text>
<line x1="349" y1="351.0" x2="545" y2="351.0" stroke="#dadada" stroke-width="1" />
<line x1="346.5" y1="351.0" x2="348.2" y2="351.0" stroke="#555" stroke-width="0.6" />
<text x="345" y="353.7" font-size="7.4" fill="#111" font-weight="normal" text-anchor="end" textLength="3.2" lengthAdjust="spacingAndGlyphs" >2</text>
<line x1="349" y1="342.5" x2="545" y2="342.5" stroke="#dadada" stroke-width="1" />
<line x1="346.5" y1="342.5" x2="348.2" y2="342.5" stroke="#555" stroke-width="0.6" />
<text x="345" y="345.2" font-size="7.4" fill="#111" font-weight="normal" text-anchor="end" textLength="3.2" lengthAdjust="spacingAndGlyphs" >3</text>
<line x1="349" y1="334.0" x2="545" y2="334.0" stroke="#dadada" stroke-width="1" />
<line x1="346.5" y1="334.0" x2="348.2" y2="334.0" stroke="#555" stroke-width="0.6" />
<text x="345" y="336.7" font-size="7.4" fill="#111" font-weight="normal" text-anchor="end" textLength="3.2" lengthAdjust="spacingAndGlyphs" >4</text>
<line x1="349" y1="325.5" x2="545" y2="325.5" stroke="#dadada" stroke-width="1" />
<line x1="346.5" y1="325.5" x2="348.2" y2="325.5" stroke="#555" stroke-width="0.6" />
<text x="345" y="328.2" font-size="7.4" fill="#111" font-weight="normal" text-anchor="end" textLength="3.2" lengthAdjust="spacingAndGlyphs" >5</text>
<line x1="349" y1="317.0" x2="545" y2="317.0" stroke="#dadada" stroke-width="1" />
<line x1="346.5" y1="317.0" x2="348.2" y2="317.0" stroke="#555" stroke-width="0.6" />
<text x="345" y="319.7" font-size="7.4" fill="#111" font-weight="normal" text-anchor="end" textLength="3.2" lengthAdjust="spacingAndGlyphs" >6</text>
<line x1="349" y1="308.5" x2="545" y2="308.5" stroke="#dadada" stroke-width="1" />
<line x1="346.5" y1="308.5" x2="348.2" y2="308.5" stroke="#555" stroke-width="0.6" />
<text x="345" y="311.2" font-size="7.4" fill="#111" font-weight="normal" text-anchor="end" textLength="3.2" lengthAdjust="spacingAndGlyphs" >7</text>
<line x1="349" y1="300.0" x2="545" y2="300.0" stroke="#dadada" stroke-width="1" />
<line x1="346.5" y1="300.0" x2="348.2" y2="300.0" stroke="#555" stroke-width="0.6" />
<text x="345" y="302.7" font-size="7.4" fill="#111" font-weight="normal" text-anchor="end" textLength="3.2" lengthAdjust="spacingAndGlyphs" >8</text>
<line x1="349" y1="291.5" x2="545" y2="291.5" stroke="#dadada" stroke-width="1" />
<line x1="346.5" y1="291.5" x2="348.2" y2="291.5" stroke="#555" stroke-width="0.6" />
<text x="345" y="294.2" font-size="7.4" fill="#111" font-weight="normal" text-anchor="end" textLength="3.2" lengthAdjust="spacingAndGlyphs" >9</text>
<line x1="349" y1="283.0" x2="545" y2="283.0" stroke="#dadada" stroke-width="1" />
<line x1="346.5" y1="283.0" x2="348.2" y2="283.0" stroke="#555" stroke-width="0.6" />
<text x="345" y="285.7" font-size="7.4" fill="#111" font-weight="normal" text-anchor="end" textLength="6.4" lengthAdjust="spacingAndGlyphs" >10</text>
<line x1="349" y1="274.5" x2="545" y2="274.5" stroke="#dadada" stroke-width="1" />
<line x1="346.5" y1="274.5" x2="348.2" y2="274.5" stroke="#555" stroke-width="0.6" />
<text x="345" y="277.2" font-size="7.4" fill="#111" font-weight="normal" text-anchor="end" textLength="6.4" lengthAdjust="spacingAndGlyphs" >11</text>
<line x1="349" y1="266.0" x2="545" y2="266.0" stroke="#dadada" stroke-width="1" />
<line x1="346.5" y1="266.0" x2="348.2" y2="266.0" stroke="#555" stroke-width="0.6" />
<text x="345" y="268.7" font-size="7.4" fill="#111" font-weight="normal" text-anchor="end" textLength="6.4" lengthAdjust="spacingAndGlyphs" >12</text>
<text x="442.5" y="260.3" font-size="6.9" fill="#0a0af5" font-weight="normal" text-anchor="middle" textLength="63" lengthAdjust="spacingAndGlyphs" stroke="#0a0af5" stroke-width=".15">Avg Disk Queue Length</text>
<line x1="347.9" y1="368.25" x2="347.9" y2="265.5" stroke="#333" stroke-width="1" stroke-dasharray=".5 1.2"/>
<line x1="348.8" y1="265" x2="348.8" y2="371" stroke="#111" stroke-width="1.2" />
<line x1="348.3" y1="370.2" x2="545" y2="370.2" stroke="#111" stroke-width="1.4" />
<path d="M484.300 368L485 309.35Q485.600 306.8 486.200 309.35L486.900 368z M513.300 368L514 326.35Q514.600 323.8 515.200 326.35L515.900 368z M530.800 368V334.85L532 333.15V317.0L533.400 315.3L533.900 266.85Q534.800 264.3 535.600 266.85L536.300 368z" fill="#ff8c1a" stroke="#ff8c1a" stroke-width=".6" stroke-linejoin="round"/>
<path d="M529.500 368L530.500 359.5H532L533 368z" fill="#0a7a0a" stroke="#0a7a0a" stroke-width=".8"/>
<line x1="350" y1="367.8" x2="545" y2="367.8" stroke="#0a7a0a" stroke-width="2.6" />
<clipPath id="c552_267"><rect x="0" y="0" width="580" height="400"/></clipPath>
<g clip-path="url(#c552_267)">
<rect x="553.2" y="268.2" width="40" height="22" fill="#9a9a9a" />
<rect x="552" y="267" width="40" height="22" fill="#fff" stroke="#111" stroke-width=".8"/>
<rect x="554.8" y="269.6" width="5.6" height="5.6" fill="#fff" stroke="#777" stroke-width=".6"/>
<path d="M555.9 272.20000000000005l1.300 1.500l2.300-3" stroke="#000" stroke-width="1.3" fill="none"/>
<line x1="562.8" y1="272.6" x2="570.2" y2="272.6" stroke="#ff8c1a" stroke-width="2.2" stroke-linecap="round"/>
<text x="573.5" y="275.1" font-size="6.9" fill="#000" font-weight="normal" text-anchor="start" textLength="7" lengthAdjust="spacingAndGlyphs" stroke="#000" stroke-width=".18">D:\</text>
<rect x="554.8" y="279" width="5.6" height="5.6" fill="#fff" stroke="#777" stroke-width=".6"/>
<path d="M555.9 281.6l1.300 1.500l2.300-3" stroke="#000" stroke-width="1.3" fill="none"/>
<line x1="562.8" y1="282" x2="570.2" y2="282" stroke="#0a7a0a" stroke-width="2.2" stroke-linecap="round"/>
<text x="573.5" y="284.5" font-size="6.9" fill="#000" font-weight="normal" text-anchor="start" textLength="14" lengthAdjust="spacingAndGlyphs" stroke="#000" stroke-width=".18">Total</text>
</g>
<rect x="0" y="0" width="600" height="1" fill="#5f9cb0" />
<rect x="0" y="0" width="1" height="400" fill="#5f9cb0" />
<rect x="599" y="0" width="1" height="400" fill="#5f9cb0" />
<rect x="0" y="399" width="600" height="1" fill="#5f9cb0" />
<line x1="1" y1="398.5" x2="599" y2="398.5" stroke="#c9d6b0" stroke-width="0.8" />
<rect x="22.5" y="397.2" width="575" height="1.6" fill="#c2d4c4" />
</svg></body></html>
